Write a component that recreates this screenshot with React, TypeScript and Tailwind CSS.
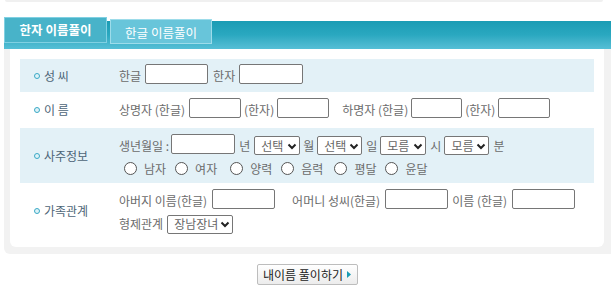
import React from 'react';

const Bullet: React.FC = () => (
    <span className="inline-block w-[6px] h-[6px] rounded-full border-[1.5px] border-[#3aa9c6] bg-[#dff3f8] mr-[4px]" />
);

const Box: React.FC<{ w: number }> = ({ w }) => (
    <span
        className="inline-block h-[20px] border border-[#767676] rounded-[2px] bg-white"
        style={{ width: w }}
    />
);

const Sel: React.FC<{ w: number; label: string }> = ({ w, label }) => (
    <span
        className="inline-flex items-center justify-between h-[19px] border border-[#767676] rounded-[2px] bg-white pl-[6px] pr-[2px] text-[#666]"
        style={{ width: w }}
    >
        <span>{label}</span>
        <svg width="10" height="10" viewBox="0 0 10 10">
            <path d="M1.5 3.5 L5 7 L8.5 3.5" fill="none" stroke="#222" strokeWidth="2" />
        </svg>
    </span>
);

const Radio: React.FC<{ label: string }> = ({ label }) => (
    <span className="inline-flex items-center gap-[7px] mr-[9px]">
        <span className="inline-block w-[13px] h-[13px] rounded-full border border-[#555] bg-white" />
        <span>{label}</span>
    </span>
);

const Row: React.FC<{ label: string; blue?: boolean; h: number; children: React.ReactNode }> = ({ label, blue, h, children }) => (
    <div className={`flex items-center ${blue ? 'bg-[#e3f1f7]' : 'bg-white'}`} style={{ height: h }}>
        <div className="w-[99px] pl-[14px] flex items-center text-[#4d6577]">
            <Bullet />
            <span>{label}</span>
        </div>
        <div className="flex-1">{children}</div>
    </div>
);

const App: React.FC = () => {
    return (
        <div className="w-[611px] h-[289px] bg-white overflow-hidden text-[12px] text-[#6b6b6b]" style={{ fontFamily: '"Noto Sans CJK KR", "Noto Sans", sans-serif' }}>
            <div className="mx-[5px] w-[598px] h-[2px] bg-[#f0f0f0] rounded-b-[2px]" />

            <div className="mt-[19px] ml-[4px] w-[620px] h-[28px] bg-gradient-to-b from-[#1a9cb4] via-[#2aa8c0] to-[#55bfd6]">
                <div className="flex items-start">
                    <div className="-mt-[4px] w-[103px] h-[26px] bg-[#48b3c9] border border-[#80d0e2] flex items-center justify-center text-white font-bold leading-none text-[12.5px]">
                        한자 이름풀이
                    </div>
                    <div className="ml-[3px] -mt-[2px] w-[102px] h-[25px] bg-[#68c5da] border border-[#9ddcea] flex items-end justify-center pb-[4px] text-white leading-none text-[12.5px]">
                        한글 이름풀이
                    </div>
                </div>
            </div>

            <div className="ml-[4px] w-[640px] bg-[#f2f2f2] pl-[6px] pb-[7px] pr-[36px] rounded-b-[6px]">
                <div className="w-[594px] bg-white rounded-b-[6px] px-[10px] pt-[10px] pb-[8px]">
                    <Row label="성 씨" blue h={33}>
                        <div className="flex items-center">
                            <span>한글</span>
                            <span className="ml-[4px]"><Box w={63} /></span>
                            <span className="ml-[5px]">한자</span>
                            <span className="ml-[4px]"><Box w={64} /></span>
                        </div>
                    </Row>
                    <Row label="이 름" h={36}>
                        <div className="flex items-center">
                            <span>상명자 (한글)</span>
                            <span className="ml-[4px]"><Box w={52} /></span>
                            <span className="ml-[3px]">(한자)</span>
                            <span className="ml-[3px]"><Box w={52} /></span>
                            <span className="ml-[13px]">하명자 (한글)</span>
                            <span className="ml-[3px]"><Box w={51} /></span>
                            <span className="ml-[3px]">(한자)</span>
                            <span className="ml-[3px]"><Box w={52} /></span>
                        </div>
                    </Row>
                    <Row label="사주정보" blue h={55}>
                        <div className="flex flex-col gap-[2px]">
                            <div className="flex items-center">
                                <span>생년월일 :</span>
                                <span className="ml-[2px]"><Box w={64} /></span>
                                <span className="ml-[4px]">년</span>
                                <span className="ml-[4px]"><Sel w={46} label="선택" /></span>
                                <span className="ml-[3px]">월</span>
                                <span className="ml-[3px]"><Sel w={45} label="선택" /></span>
                                <span className="ml-[4px]">일</span>
                                <span className="ml-[3px]"><Sel w={46} label="모름" /></span>
                                <span className="ml-[4px]">시</span>
                                <span className="ml-[3px]"><Sel w={45} label="모름" /></span>
                                <span className="ml-[4px]">분</span>
                            </div>
                            <div className="flex items-center pl-[5px]">
                                <Radio label="남자" />
                                <Radio label="여자" />
                                <span className="ml-[4px]" />
                                <Radio label="양력" />
                                <Radio label="음력" />
                                <span className="ml-[2px]" />
                                <Radio label="평달" />
                                <Radio label="윤달" />
                            </div>
                        </div>
                    </Row>
                    <Row label="가족관계" h={56}>
                        <div className="flex flex-col gap-[2px]">
                            <div className="flex items-center">
                                <span>아버지 이름(한글)</span>
                                <span className="ml-[5px]"><Box w={63} /></span>
                                <span className="ml-[17px]">어머니 성씨(한글)</span>
                                <span className="ml-[5px]"><Box w={63} /></span>
                                <span className="ml-[4px]">이름 (한글)</span>
                                <span className="ml-[5px]"><Box w={63} /></span>
                            </div>
                            <div className="flex items-center">
                                <span>형제관계</span>
                                <span className="ml-[4px]"><Sel w={66} label="장남장녀" /></span>
                            </div>
                        </div>
                    </Row>
                </div>
            </div>

            <div className="flex justify-center mt-[10px] pl-[3px]">
                <button className="w-[101px] h-[21px] border border-[#bdbdbd] rounded-[2px] bg-gradient-to-b from-white to-[#ececec] flex items-center justify-center gap-[4px] text-[#222] leading-none">
                    <span>내이름 풀이하기</span>
                    <svg width="4" height="7" viewBox="0 0 4 7">
                        <path d="M0 0 L4 3.5 L0 7 Z" fill="#1a9cb4" />
                    </svg>
                </button>
            </div>
        </div>
    );
};

export default App;
